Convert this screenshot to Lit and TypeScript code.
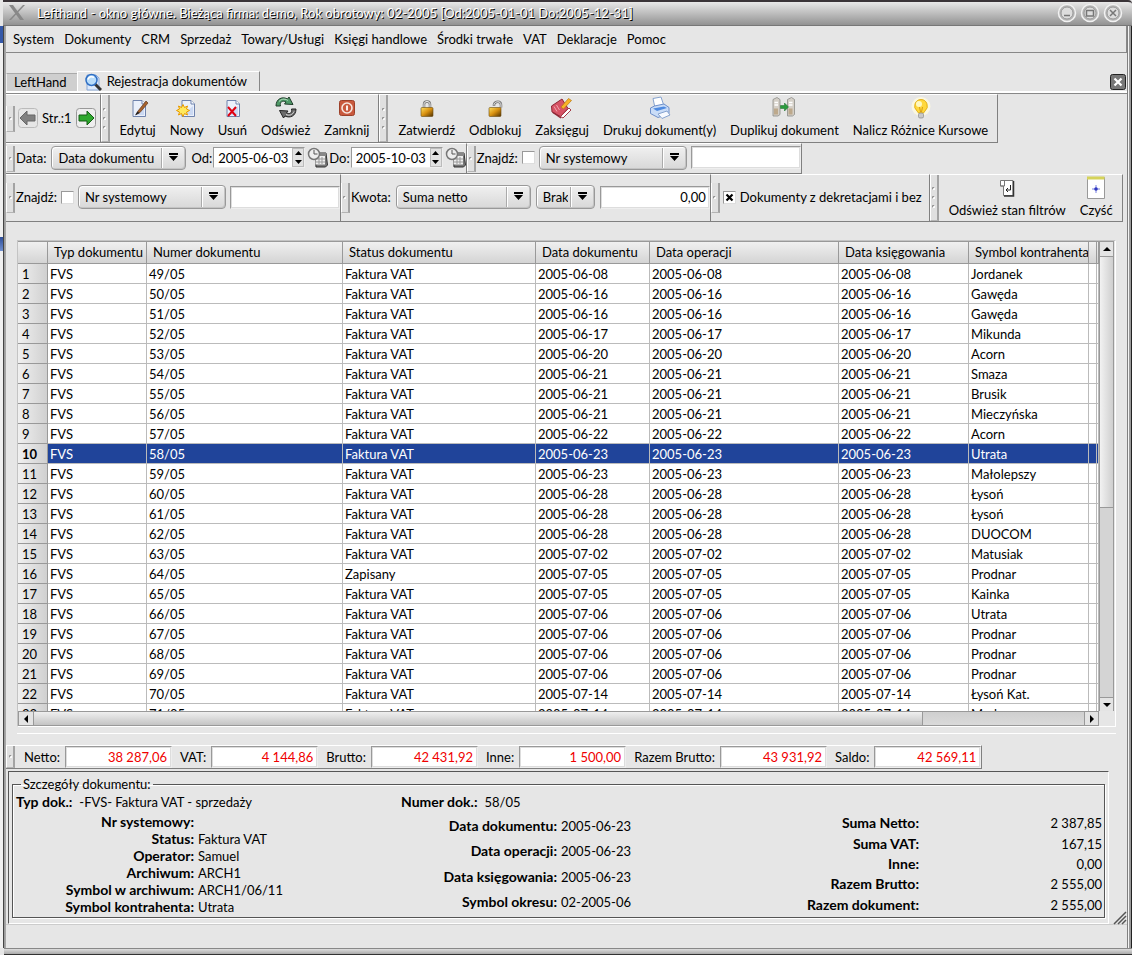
import { LitElement, html, svg, css } from "lit";
import { customElement, property, state } from "lit/decorators.js";
import { classMap } from "lit/directives/class-map.js";

type Doc = [string, string, string, string];

const DOCS: Doc[] = [
  ["49/05", "Faktura VAT", "2005-06-08", "Jordanek"],
  ["50/05", "Faktura VAT", "2005-06-16", "Gawęda"],
  ["51/05", "Faktura VAT", "2005-06-16", "Gawęda"],
  ["52/05", "Faktura VAT", "2005-06-17", "Mikunda"],
  ["53/05", "Faktura VAT", "2005-06-20", "Acorn"],
  ["54/05", "Faktura VAT", "2005-06-21", "Smaza"],
  ["55/05", "Faktura VAT", "2005-06-21", "Brusik"],
  ["56/05", "Faktura VAT", "2005-06-21", "Mieczyńska"],
  ["57/05", "Faktura VAT", "2005-06-22", "Acorn"],
  ["58/05", "Faktura VAT", "2005-06-23", "Utrata"],
  ["59/05", "Faktura VAT", "2005-06-23", "Małolepszy"],
  ["60/05", "Faktura VAT", "2005-06-28", "Łysoń"],
  ["61/05", "Faktura VAT", "2005-06-28", "Łysoń"],
  ["62/05", "Faktura VAT", "2005-06-28", "DUOCOM"],
  ["63/05", "Faktura VAT", "2005-07-02", "Matusiak"],
  ["64/05", "Zapisany", "2005-07-05", "Prodnar"],
  ["65/05", "Faktura VAT", "2005-07-05", "Kainka"],
  ["66/05", "Faktura VAT", "2005-07-06", "Utrata"],
  ["67/05", "Faktura VAT", "2005-07-06", "Prodnar"],
  ["68/05", "Faktura VAT", "2005-07-06", "Prodnar"],
  ["69/05", "Faktura VAT", "2005-07-06", "Prodnar"],
  ["70/05", "Faktura VAT", "2005-07-14", "Łysoń Kat."],
  ["71/05", "Faktura VAT", "2005-07-14", "Marko"],
];

const HEADERS = ["Typ dokumentu", "Numer dokumentu", "Status dokumentu", "Data dokumentu", "Data operacji", "Data księgowania", "Symbol kontrahenta"];

const MENU = ["System", "Dokumenty", "CRM", "Sprzedaż", "Towary/Usługi", "Księgi handlowe", "Środki trwałe", "VAT", "Deklaracje", "Pomoc"];

const TOTALS: [string, string][] = [
  ["Netto:", "38 287,06"],
  ["VAT:", "4 144,86"],
  ["Brutto:", "42 431,92"],
  ["Inne:", "1 500,00"],
  ["Razem Brutto:", "43 931,92"],
  ["Saldo:", "42 569,11"],
];

const icon = (size: number, body: unknown) =>
  html`<svg width=${size} height=${size} viewBox="0 0 ${size} ${size}" aria-hidden="true">${body}</svg>`;

const page = svg`<path d="M7 4.500h9l3.500 3.500v12.500h-12.500z" fill="#eaf0fb" stroke="#6f83ad"/><path d="M16 4.500v3.500h3.500" fill="#fff" stroke="#6f83ad"/><path d="M9 18l9-8v9H9z" fill="#cbd9f3"/>`;

const lock = (open: boolean) => svg`
  ${open
    ? svg`<path d="M11 10V8.500c1-3.500 7-4 7 .5v2.500" fill="none" stroke="#777" stroke-width="2.500"/><path d="M11 9.500V8.500c1-3.500 7-4 7 .5v2" fill="none" stroke="#e8e8e8"/>`
    : svg`<path d="M9 12V8.500c0-4 6-4 6 0V12" fill="none" stroke="#777" stroke-width="2.500"/><path d="M9 12V8.500c0-4 6-4 6 0V12" fill="none" stroke="#eee"/>`}
  <defs><linearGradient id="gold" x1="0" x2="1" y1="0" y2="1"><stop offset="0" stop-color="#ffe060"/><stop offset=".5" stop-color="#d89010"/><stop offset="1" stop-color="#503000"/></linearGradient></defs>
  <rect x="6" y="11.500" width="12" height="9" rx="1" fill="url(#gold)" stroke="#6a4a10" stroke-width=".6"/>`;

const server = (x: number) => svg`<path d="M${x} 3.500l4-2 3 2v15l-2 1.500h-5z" fill="#d5d0c8" stroke="#8b8b86" stroke-width=".8"/><path d="M${x + 1.5} 6.500h3.500M${x + 1.5} 9h3.500" stroke="#fff" stroke-width="1.500"/><path d="M${x + 1} 12.500h4v6h-4z" fill="#bda98c"/>`;

const ICONS: Record<string, unknown> = {
  edit: svg`${page}<path d="M10 18.500l2-3.500 8-10 2 2-8 9.500z" fill="#a8622b" stroke="#5d3a22" stroke-width=".7"/><path d="M9 19.500l2.500-4 2 1.500z" fill="#222"/>`,
  add: svg`${page}<path d="M8 8.500l1.500 3 3-1.500-1 3 3 1.500-3 1.500 1 3-3-1.500-1.500 3-1.500-3-3 1.500 1-3-3-1.500 3-1.500-1-3 3 1.500z" fill="#ffe95e" stroke="#e89a00"/>`,
  del: svg`${page}<path d="M8 11l8 9M16 11l-8 9" stroke="#e00010" stroke-width="2"/>`,
  refresh: svg`<path d="M2 10C2 3 8 0 13.500 3L15 1l4 7.500-8.500-.5 1.500-2C8.500 4 5.500 6 6.500 10z" fill="#4f9a68" stroke="#203c2a"/><path d="M5 5.500C8 2 12 3 14 4.500" stroke="#b9e3c5" fill="none"/><path d="M22 13c0 7-6 9.500-11 7l-1.500 2-4-7.500 8.500.5-1.500 2c3 1.500 6 0 5-4z" fill="#6c6c6c" stroke="#222"/><path d="M20 15.500c-1.500 3.500-5 4.500-8 3" stroke="#ddd" fill="none"/>`,
  power: svg`<rect x="4.500" y="4.500" width="15" height="15" rx="2" fill="#c9593d" stroke="#9c4029"/><circle cx="12" cy="12" r="5" fill="none" stroke="#f7e7e0" stroke-width="1.600"/><path d="M12 9.500v5" stroke="#fff" stroke-width="1.800"/>`,
  lock: lock(false),
  unlock: lock(true),
  book: svg`<path d="M1.500 10L12 3l6 9.500L10.500 20.500 2 16z" fill="#d65365" stroke="#8e2735"/><path d="M10.500 20.500L19 12l2 2-8 8z" fill="#fff" stroke="#a33a46"/><path d="M4 10.500l3 5M6.500 9l3 5" stroke="#f2a5ae"/><path d="M11 11l7.500-8.500 3 2-8 8.500z" fill="#f8b426" stroke="#b87610" stroke-width=".7"/><path d="M3 16.500l8 5.500" stroke="#8e2735" stroke-width="1.500"/>`,
  print: svg`<path d="M5 2.500l8-1.500 3 9-9 2z" fill="#fff" stroke="#86a3cf"/><path d="M2.500 12l4-2 9.500-2 5 3.500v6l-11 4-7.500-4z" fill="#c9dcf7" stroke="#6e8fc9"/><path d="M5 12.500l11-2 3 1.500-10 3z" fill="#4e8ae0"/><path d="M10 18l9-3 3 4-8 3.500z" fill="#f7faff" stroke="#86a3cf"/>`,
  dup: svg`${server(1)}${server(15.5)}<path d="M8.500 9.500h4v-2.500l4 4-4 4v-2.500h-4z" fill="#2a9a3c" stroke="#166b25" stroke-width=".5"/>`,
  bulb: svg`<circle cx="12" cy="10.500" r="9.500" fill="#fffbe0" opacity=".8"/><path d="M12 3.500a6.500 6.500 0 0 1 4 11.500l-1.500 2h-5L8 15a6.500 6.500 0 0 1 4-11.500z" fill="#ffd83c" stroke="#dda400" stroke-width=".8"/><circle cx="10" cy="8" r="3" fill="#fff8c0"/><path d="M10.500 11l1 5M13.500 11l-1 5" stroke="#c58200" stroke-width=".7"/><rect x="9.500" y="17" width="5" height="5" rx="1.500" fill="#c9c9c9" stroke="#888" stroke-width=".7"/>`,
  state: svg`<path d="M5.500 4.500h12.500v15H8.500V10h-3z" fill="#fff" stroke="#777"/><path d="M18.500 5v15H9" fill="none" stroke="#333" stroke-width="1.500"/><path d="M5.500 10h4V5" fill="none" stroke="#777"/><path d="M15.500 9v5h-4M13 12l-2 2 2 2" fill="none" stroke="#222"/>`,
  clean: svg`<path d="M3.500 1.500h17v21h-17z" fill="#fff" stroke="#999"/><path d="M3 2h17.500" stroke="#d5d35a" stroke-width="3"/><path d="M12 9v8M8 13h8" stroke="#7a82e0"/><circle cx="12" cy="13" r="1.800" fill="#3038c0"/>`,
};

const calendar = icon(21, svg`<path d="M8 6h11l1.500 12-2 2H9z" fill="#777" stroke="#333"/><path d="M8.500 7.500h9.500v10H8.500z" fill="#eee"/><path d="M9 12h9M9 15h9M12 10v7M15 10v7" stroke="#999"/><path d="M8 6h11v3H8z" fill="#888"/><circle cx="7" cy="7" r="5.500" fill="#eee" stroke="#777" stroke-width="1.500"/><path d="M7 3v4h3.500" fill="none" stroke="#555"/>`);

const shared = css`
  * { box-sizing: border-box; }
  button, input, select, fieldset, legend {
    font: inherit; color: inherit; margin: 0; padding: 0; border: 0; background: none; border-radius: 0; min-width: 0;
  }
  svg { display: block; flex: none; }
`;

@customElement("dock-bar")
class DockBar extends LitElement {
  @property({ type: Number }) dots = 1;
  static styles = css`
    :host { display: flex; border: 1px solid; border-color: #fff #808080 #808080 #e6e6e6; border-left: 0; }
    .grip {
      box-sizing: border-box; width: 9px; flex: none; margin-right: 1px; border-left: 1px solid #fff; border-right: 2px solid #a3a3a3;
      border-bottom: 1px solid #b4b4b4; display: flex; flex-direction: column; justify-content: center; gap: 4px; align-items: center;
      background: #e0e0e0;
    }
    .small { align-self: center; height: var(--grip, 26px); }
    .dot { width: 3px; height: 3px; border: 1px solid; border-color: #888 #fff #fff #888; border-radius: 2px; box-sizing: border-box; margin: 1px 0; }
    .body { display: flex; align-items: center; flex: 1; }
  `;
  render() {
    return html`
      <div class=${classMap({ grip: true, small: this.dots === 1 })}>
        ${Array.from({ length: this.dots }, () => html`<span class="dot"></span>`)}
      </div>
      <div class="body"><slot></slot></div>`;
  }
}

@customElement("tool-button")
class ToolButton extends LitElement {
  @property() icon = "";
  @property() label = "";
  static styles = [shared, css`
    :host { display: flex; }
    .tool { display: flex; flex-direction: column; align-items: center; gap: 1px; padding: 0 7px; line-height: 18px; white-space: nowrap; }
  `];
  render() {
    return html`<button class="tool">${icon(24, ICONS[this.icon])}<span>${this.label}</span></button>`;
  }
}

@customElement("app-root")
class AppRoot extends LitElement {
  @state() private selected = 9;

  static styles = [shared, css`
    :host {
      display: flex; flex-direction: column; height: 100vh; min-height: 700px; overflow: hidden;
      font-family: Lato, "Noto Sans", sans-serif; font-size: 13px; line-height: 18px; color: #000; background: #e6e6e6;
    }
    .titlebar {
      display: flex; align-items: center; height: 26px; margin-left: 3px; padding: 0 9px 2px 5px; gap: 10px;
      border-top: 2px solid #3a3438; border-bottom: 1px solid #777; border-radius: 0 4px 0 0;
      background: linear-gradient(#e8e8e8, #d2d2d2 25%, #929292); color: #fff; text-shadow: 1px 1px 0 #000;
    }
    .title { flex: 1; margin: 0; font-size: 13px; font-weight: 400; }
    .winbuttons { display: flex; gap: 3px; }
    .winbuttons button, .sysmenu { display: flex; }
    .frame {
      flex: 1; min-height: 0; display: flex; flex-direction: column; padding: 0 5px 0 6px;
      background:
        linear-gradient(#3458a8, #3458a8) 0 0 / 3px 17px no-repeat,
        linear-gradient(#2c4c98, #7090d0) 0 211px / 3px 14px no-repeat,
        linear-gradient(90deg, #f0f0f0 3px, #444 3px, #444 4px, #999 4px, #aaa 6px) 0 0 / 6px 100% no-repeat,
        linear-gradient(90deg, #808080 1px, #f4f4f4 1px, #f4f4f4 2px, #999 2px, #999 4px, #222 4px) 100% 0 / 5px 100% no-repeat,
        #e6e6e6;
    }
    .menu { display: flex; height: 27px; align-items: center; gap: 10px; padding-left: 7px; border-bottom: 1px solid #888; border-right: 1px solid #888; }
    .tabs { display: flex; align-items: flex-end; height: 40px; border-bottom: 2px solid #fff; padding-right: 1px; }
    .tab { height: 18px; padding: 0 10px 0 7px; background: #cfcfcf; border-top: 1px solid #aaa; border-left: 1px solid #eee; line-height: 17px; }
    .tab.on { display: flex; align-items: center; gap: 5px; height: 20px; padding: 0 12px 0 6px; background: #e6e6e6; border: 1px solid; border-color: #fff #888 transparent #fff; border-bottom: 0; }
    .spacer { flex: 1; }
    .closetab { align-self: center; margin-top: 20px; display: flex; }
    .docks { border-top: 1px solid #888; }
    .row { display: flex; }
    .one { height: 49px; }
    .two { height: 31px; }
    .three { height: 48px; --grip: 30px; }
    .pager, .field, .tools { display: flex; align-items: center; padding-bottom: 2px; }
    .pager { gap: 4px; padding-left: 2px; padding-right: 4px; }
    .pager button { display: flex; }
    .tools { padding-left: 2px; padding-right: 2px; }
    .field { white-space: nowrap; gap: 4px; }
    .field.wide { gap: 5px; }
    .field.tick { padding-left: 2px; padding-right: 7px; }
    .drop {
      appearance: none; height: 24px; padding: 0 26px 0 6px; border: 1px solid #999; border-radius: 4px;
      box-shadow: inset 1px 1px 0 #fff, inset -1px -1px 0 #c4c4c4; cursor: default;
      background:
        url("data:image/svg+xml,%3Csvg xmlns='http://www.w3.org/2000/svg' width='24' height='22'%3E%3Cpath d='M.5 1v20' stroke='%23aaa'/%3E%3Cpath d='M1.500 1v20' stroke='%23fff'/%3E%3Cpath d='M8 6h9v2H8zM8 9h9l-4.500 5z'/%3E%3C/svg%3E") right 0 center no-repeat,
        linear-gradient(#f0f0f0, #d8d8d8);
    }
    .w134 { width: 135px; }
    .w148 { width: 148px; }
    .w59 { width: 59px; }
    .text { height: 23px; width: 110px; background: #fff; border: 1px solid; border-color: #999 #eee #eee #999; padding: 0 3px; box-shadow: 0 0 0 1px #ddd inset; }
    .num { text-align: right; }
    .check { appearance: none; width: 13px; height: 13px; background: #fff; border: 1px solid; border-color: #999 #ddd #ddd #999; }
    .check:checked {
      background: #fff url("data:image/svg+xml,%3Csvg xmlns='http://www.w3.org/2000/svg' width='11' height='11'%3E%3Cpath d='M2.500 2.500l6 6M8.500 2.500l-6 6' stroke='%23000' stroke-width='2.200'/%3E%3C/svg%3E") center no-repeat;
    }
    .period { display: flex; align-items: center; gap: 1px; }
    .date { display: flex; align-items: center; height: 21px; width: 92px; margin-right: 1px; background: #fff; border: 1px solid; border-color: #999 #eee #eee #999; }
    .date input { flex: 1; width: 0; padding-left: 4px; }
    .spin { display: flex; flex-direction: column; width: 12px; height: 19px; background: #e2e2e2; border: 1px solid #bbb; }
    .spin button { flex: 1; display: flex; align-items: center; justify-content: center; }
    .gridbox {
      flex: 1; min-height: 120px; margin: 18px 11px 0 11px; display: grid; grid-template: minmax(0, 1fr) 15px / minmax(0, 1fr) 16px;
      border: 1px solid; border-color: #c4c4c4 #fff #fff #c4c4c4;
    }
    .view { overflow: hidden; background: #fff; }
    .docs { width: 100%; table-layout: fixed; border-collapse: separate; border-spacing: 0; }
    .docs td, .docs th { height: 20px; padding: 1px 0 0 2px; line-height: 18px; text-align: left; font-weight: 400; white-space: nowrap; overflow: hidden; border: 0 solid #bbb; border-width: 0 1px 1px 0; }
    .docs thead th { height: 23px; padding: 0 0 0 6px; line-height: 21px; border-color: #999; border-top: 1px solid #999; background: linear-gradient(#f0f0f0, #d4d4d4); }
    .docs tbody th { padding-left: 4px; background: linear-gradient(90deg, #f0f0f0, #d0d0d0); border-color: #999; }
    .docs .sel td { background: #20449a; color: #fff; }
    .docs .sel th { font-weight: 700; }
    .c0 { width: 30px; } .c1 { width: 99px; } .c2 { width: 196px; } .c3 { width: 193px; } .c4 { width: 114px; }
    .c5 { width: 189px; } .c6 { width: 130px; } .c7 { width: 120px; } .c8 { width: 8px; }
    .vbar, .hbar { display: flex; background: #d4d4d4; }
    .vbar { flex-direction: column; border: 1px solid #999; border-bottom: 0; margin-right: 1px; }
    .hbar { border: 1px solid #999; }
    .arrow { display: flex; align-items: center; justify-content: center; background: #e4e4e4; }
    .vbar .arrow { height: 14px; } .hbar .arrow { width: 14px; }
    .thumb { background: linear-gradient(90deg, #f2f2f2, #cfcfcf); border: solid #999; border-width: 1px 0; flex: 57; }
    .track { flex: 43; }
    .hbar .thumb { background: linear-gradient(#efefef, #c4c4c4); border-width: 0 1px; flex: 889; }
    .hbar .track { flex: 161; background: linear-gradient(#cfcfcf, #dadada); }
    .hbar .arrow:last-child { border-left: 1px solid #999; }
    .vbar .arrow:last-child { border-top: 1px solid #999; }
    .rule { margin: 6px 11px 0; border-top: 1px solid #fff; height: 12px; }
    .totals { display: flex; height: 24px; --grip: 22px; }
    .total { display: flex; align-items: center; gap: 5px; padding-left: 8px; white-space: nowrap; }
    .total .text { width: 107px; height: 22px; color: #f00000; padding: 0 4px; }
    .details { margin: 2px 18px 0 2px; padding: 3px 3px 5px; border: 1px solid; border-color: #555 #fff #fff #555; }
    .group { border: 1px solid #555; box-shadow: 1px 1px 0 #fff, inset 1px 1px 0 #fff; padding: 0 2px 2px; }
    .group legend { margin-left: 6px; padding: 0 2px; height: 18px; }
    .head, .cols { display: grid; grid-template-columns: 385px 355px 1fr; }
    .head { height: 20px; padding-left: 1px; }
    .cols { height: 102px; }
    .list { display: grid; grid-auto-rows: 1fr; align-items: center; margin: 0; column-gap: 4px; line-height: 16px; }
    .list dt, .head b { font-size: 14px; font-weight: 700; }
    .list dt { text-align: right; }
    .list dd { margin: 0; }
    .head b { margin-right: 7px; }
    .left { grid-template-columns: 179px 1fr; }
    .mid { grid-template-columns: 157px 1fr; }
    .right { grid-template-columns: 164px 1fr; }
    .right dd { text-align: right; }
    .status { display: flex; justify-content: flex-end; height: 24px; border-top: 1px solid #ccc; }
    .foot { height: 7px; border-top: 1px solid #888; border-bottom: 1px solid #333; background: linear-gradient(#ddd, #aaa); margin-left: 4px; }
    .sizer { margin: -14px 0 0; height: 14px; }
  `];

  private drop(cls: string, text: string, label: string) {
    return html`<select class="drop ${cls}" aria-label=${label}><option>${text}</option></select>`;
  }

  private date(id: string, label: string, value: string) {
    return html`
      <label for=${id}>${label}</label>
      <div class="date">
        <input id=${id} .value=${value}>
        <div class="spin">
          <button aria-label="Zwiększ"><svg width="7" height="4"><path d="M0 4L3.500 0 7 4z" /></svg></button>
          <button aria-label="Zmniejsz"><svg width="7" height="4"><path d="M0 0L3.500 4 7 0z" /></svg></button>
        </div>
      </div>
      <button aria-label="Kalendarz">${calendar}</button>`;
  }

  private arrow(d: string) {
    return html`<button class="arrow" aria-label="Przewiń"><svg width="8" height="8"><path d=${d} /></svg></button>`;
  }

  private list(cls: string, items: [string, string][]) {
    return html`<dl class="list ${cls}">${items.map(([k, v]) => html`<dt>${k}</dt><dd>${v}</dd>`)}</dl>`;
  }

  private row(doc: Doc, i: number) {
    const [no, status, date, who] = doc;
    return html`
      <tr class=${classMap({ sel: i === this.selected })} @click=${() => (this.selected = i)}>
        <th scope="row">${i + 1}</th>
        <td>FVS</td><td>${no}</td><td>${status}</td><td>${date}</td><td>${date}</td><td>${date}</td><td>${who}</td><td></td><td></td>
      </tr>`;
  }

  render() {
    const round = (d: string) => icon(20, svg`<circle cx="10" cy="10" r="8.500" fill="#b5b5b5" stroke="#f2f2f2" stroke-width="1.500"/><circle cx="10" cy="10" r="6" fill="#ddd" stroke="#999"/><path d=${d} fill="none" stroke="#777" stroke-width="1.500"/>`);
    return html`
      <header class="titlebar">
        <button class="sysmenu" aria-label="Menu okna">${icon(19, svg`<path d="M1 2h4l11 15h-4z" fill="#888"/><path d="M17 2h-2L1 17h2z" fill="#888"/>`)}</button>
        <h1 class="title">Lefthand - okno główne. Bieżąca firma: demo, Rok obrotowy: 02-2005 [Od:2005-01-01 Do:2005-12-31]</h1>
        <div class="winbuttons">
          <button aria-label="Minimalizuj">${round("M7 12.500h6")}</button>
          <button aria-label="Maksymalizuj">${round("M6.500 7.500h7v5.500h-7z")}</button>
          <button aria-label="Zamknij okno">${round("M7 7l6 6M13 7l-6 6")}</button>
        </div>
      </header>
      <main class="frame">
        <nav class="menu">${MENU.map((m) => html`<button>${m}</button>`)}</nav>
        <div class="tabs" role="tablist">
          <button class="tab" role="tab" aria-selected="false">LeftHand</button>
          <button class="tab on" role="tab" aria-selected="true">
            ${icon(18, svg`<path d="M3 2h9l3 3v12H3z" fill="#dce9fb" stroke="#8aa9d8"/><path d="M11 11l6 6" stroke="#333" stroke-width="3"/><circle cx="7.500" cy="7" r="5.500" fill="#b8dcfa" stroke="#2f6fc4" stroke-width="1.500"/><path d="M4 6.500c1-3 4-3.500 6-2" stroke="#fff" fill="none" stroke-width="1.500"/>`)}
            Rejestracja dokumentów
          </button>
          <span class="spacer"></span>
          <button class="closetab" aria-label="Zamknij kartę">${icon(16, svg`<rect x=".5" y=".5" width="15" height="15" rx="2" fill="#777" stroke="#222"/><path d="M4.500 4.500l7 7M11.500 4.500l-7 7" stroke="#fff" stroke-width="2.200"/>`)}</button>
        </div>
        <section class="docks">
          <div class="row one">
            <dock-bar>
              <div class="pager">
                <button aria-label="Poprzednia strona">${icon(20, svg`<rect x=".5" y=".5" width="19" height="19" rx="3" fill="#e6e6e6" stroke="#bbb"/><path d="M2 10l7-7v4h8v6H9v4z" fill="#808080" stroke="#666"/>`)}</button>
                <span>Str.:1</span>
                <button aria-label="Następna strona">${icon(20, svg`<rect x=".5" y=".5" width="19" height="19" rx="3" fill="#eee" stroke="#999"/><path d="M18 10l-7-7v4H3v6h8v4z" fill="#2ea82e" stroke="#145c14"/>`)}</button>
              </div>
            </dock-bar>
            <dock-bar dots="3"><div class="tools">
              <tool-button icon="edit" label="Edytuj"></tool-button>
              <tool-button icon="add" label="Nowy"></tool-button>
              <tool-button icon="del" label="Usuń"></tool-button>
              <tool-button icon="refresh" label="Odśwież"></tool-button>
              <tool-button icon="power" label="Zamknij"></tool-button>
            </div></dock-bar>
            <dock-bar dots="3"><div class="tools">
              <tool-button icon="lock" label="Zatwierdź"></tool-button>
              <tool-button icon="unlock" label="Odblokuj"></tool-button>
              <tool-button icon="book" label="Zaksięguj"></tool-button>
              <tool-button icon="print" label="Drukuj dokument(y)"></tool-button>
              <tool-button icon="dup" label="Duplikuj dokument"></tool-button>
              <tool-button icon="bulb" label="Nalicz Różnice Kursowe"></tool-button>
            </div></dock-bar>
          </div>
          <div class="row two">
            <dock-bar><div class="field wide">
              <span>Data:</span>${this.drop("w134", "Data dokumentu", "Data")}
              <div class="period">${this.date("from", "Od:", "2005-06-03")}${this.date("to", "Do:", "2005-10-03")}</div>
            </div></dock-bar>
            <dock-bar><div class="field">
              <label for="f1">Znajdź:</label><input id="f1" class="check" type="checkbox">${this.drop("w148", "Nr systemowy", "Pole")}
              <input class="text" aria-label="Szukany tekst">
            </div></dock-bar>
          </div>
          <div class="row three">
            <dock-bar><div class="field">
              <label for="f2">Znajdź:</label><input id="f2" class="check" type="checkbox">${this.drop("w148", "Nr systemowy", "Pole")}
              <input class="text" aria-label="Szukany tekst">
            </div></dock-bar>
            <dock-bar><div class="field wide">
              <span>Kwota:</span>${this.drop("w134", "Suma netto", "Kwota")}${this.drop("w59", "Brak", "Warunek")}
              <input class="text num" aria-label="Wartość" .value=${"0,00"}>
            </div></dock-bar>
            <dock-bar><div class="field tick">
              <input id="f3" class="check" type="checkbox" checked><label for="f3">Dokumenty z dekretacjami i bez</label>
            </div></dock-bar>
            <dock-bar dots="3"><div class="tools">
              <tool-button icon="state" label="Odśwież stan filtrów"></tool-button>
              <tool-button icon="clean" label="Czyść"></tool-button>
            </div></dock-bar>
          </div>
        </section>
        <section class="gridbox">
          <div class="view">
            <table class="docs">
              <colgroup>${[0, 1, 2, 3, 4, 5, 6, 7, 8].map((n) => html`<col class="c${n}">`)}<col></colgroup>
              <thead><tr><th></th>${HEADERS.map((h) => html`<th scope="col">${h}</th>`)}<th></th><th></th></tr></thead>
              <tbody>${DOCS.map((d, i) => this.row(d, i))}</tbody>
            </table>
          </div>
          <div class="vbar">${this.arrow("M0 6l4-4 4 4z")}<div class="thumb"></div><div class="track"></div>${this.arrow("M0 2l4 4 4-4z")}</div>
          <div class="hbar">${this.arrow("M6 0L2 4l4 4z")}<div class="thumb"></div><div class="track"></div>${this.arrow("M2 0l4 4-4 4z")}</div>
        </section>
        <div class="rule"></div>
        <section class="totals">
          <dock-bar>
            ${TOTALS.map(([k, v]) => html`<label class="total">${k}<input class="text num" readonly .value=${v}></label>`)}
          </dock-bar>
        </section>
        <section class="details">
          <fieldset class="group">
            <legend>Szczegóły dokumentu:</legend>
            <div class="head">
              <div><b>Typ dok.:</b>-FVS- Faktura VAT - sprzedaży</div>
              <div><b>Numer dok.:</b>58/05</div>
            </div>
            <div class="cols">
              ${this.list("left", [["Nr systemowy:", ""], ["Status:", "Faktura VAT"], ["Operator:", "Samuel"], ["Archiwum:", "ARCH1"], ["Symbol w archiwum:", "ARCH1/06/11"], ["Symbol kontrahenta:", "Utrata"]])}
              ${this.list("mid", [["Data dokumentu:", "2005-06-23"], ["Data operacji:", "2005-06-23"], ["Data księgowania:", "2005-06-23"], ["Symbol okresu:", "02-2005-06"]])}
              ${this.list("right", [["Suma Netto:", "2 387,85"], ["Suma VAT:", "167,15"], ["Inne:", "0,00"], ["Razem Brutto:", "2 555,00"], ["Razem dokument:", "2 555,00"]])}
            </div>
          </fieldset>
        </section>
        <div class="status"><div class="sizer">${icon(14, svg`<path d="M1 13L13 1M5 13l8-8M9 13l4-4" stroke="#555" stroke-width="1.500"/>`)}</div></div>
      </main>
      <footer class="foot"></footer>
    `;
  }
}
